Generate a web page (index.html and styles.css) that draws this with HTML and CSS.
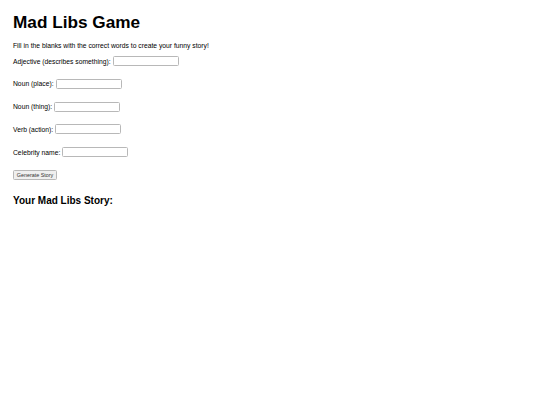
FILE: index.html
```html
<!DOCTYPE html>
<html>
<head>
<meta charset="utf-8">
<link rel="stylesheet" href="styles.css">
</head>
<body>
<h1 class="title">Mad Libs Game</h1>
<p class="intro">Fill in the blanks with the correct words to create your funny story!</p>
<form class="form">
  <div class="row"><label>Adjective (describes something):</label><input class="field" type="text"></div>
  <div class="row"><label>Noun (place):</label><input class="field" type="text"></div>
  <div class="row"><label>Noun (thing):</label><input class="field" type="text"></div>
  <div class="row"><label>Verb (action):</label><input class="field" type="text"></div>
  <div class="row"><label>Celebrity name:</label><input class="field" type="text"></div>
  <div class="row"><button type="button" class="btn">Generate Story</button></div>
</form>
<h2 class="subtitle">Your Mad Libs Story:</h2>
</body>
</html>
```
FILE: styles.css
```css
html, body { background: #fff; }
body {
  margin: 0;
  padding: 13px;
  font-family: "Liberation Sans", Arial, sans-serif;
  font-size: 6.75px;
  color: #000;
}
.title {
  font-size: 17.2px;
  font-weight: bold;
  margin: 0;
  line-height: 18px;
}
.intro {
  margin: 11px 0 0;
  line-height: 8px;
}
.form {
  display: flex;
  flex-direction: column;
  gap: 14.8px;
  margin-top: 7px;
}
.row {
  display: flex;
  align-items: center;
  gap: 2px;
  height: 8px;
}
.field {
  width: 62px;
  height: 6px;
  border: 1px solid #b8b8b8;
  border-radius: 1.5px;
  padding: 1px;
  margin: 0;
  font-size: 6px;
  background: #fff;
}
.btn {
  font-family: "Liberation Sans", Arial, sans-serif;
  font-size: 5.4px;
  color: #333;
  height: 10px;
  width: 44px;
  padding: 0;
  margin: 0;
  border: 1px solid #b8b8b8;
  border-radius: 1.5px;
  background: #efefef;
}
.subtitle {
  font-size: 10px;
  font-weight: bold;
  margin: 16px 0 0;
  line-height: 12px;
}
```
